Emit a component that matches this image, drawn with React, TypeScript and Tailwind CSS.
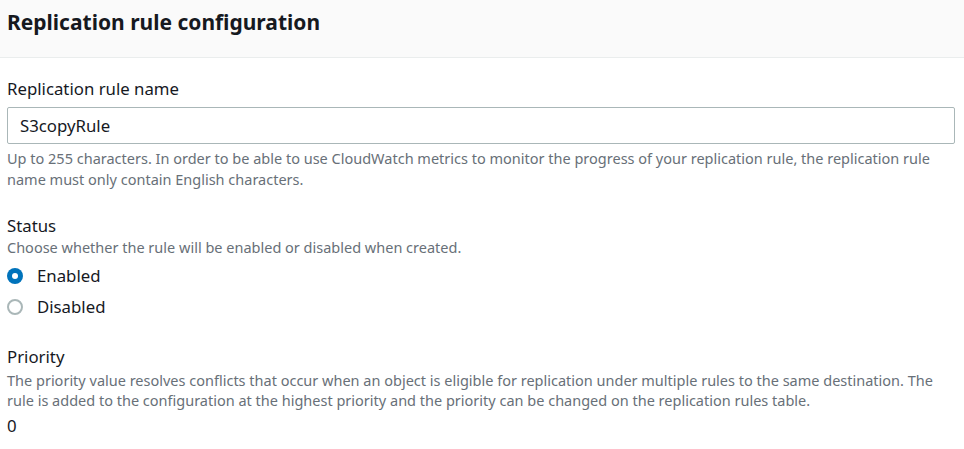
export default function App() {
  return (
    <div className="w-[964px] h-[449px] bg-white text-[#16191f] overflow-hidden" style={{ fontFamily: '"Noto Sans", Arial, sans-serif' }}>
      <div className="h-[58px] bg-[#fafafa] border-b border-[#eaeded] px-[7px] flex items-center">
        <h2 className="text-[21px] font-bold leading-[24px] -mt-[14px]">Replication rule configuration</h2>
      </div>
      <div className="px-[7px] pt-[20px]">
        <label className="block text-[16.8px] leading-[22px]">Replication rule name</label>
        <div className="mt-[7px] mr-[2px] h-[37px] border border-[#aab7b8] rounded-[2px] px-[12px] flex items-center text-[16.8px]">
          S3copyRule
        </div>
        <p className="mt-[4px] text-[14.5px] leading-[21px] text-[#687078]">
          Up to 255 characters. In order to be able to use CloudWatch metrics to monitor the progress of your replication rule, the replication rule name must only contain English characters.
        </p>

        <div className="mt-[25px]">
          <div className="text-[16.8px] leading-[22px]">Status</div>
          <div className="text-[14.5px] leading-[20px] text-[#687078]">Choose whether the rule will be enabled or disabled when created.</div>
          <div className="mt-[8px] flex flex-col gap-[9px]">
            <div className="flex items-center gap-[14px] h-[22px]">
              <span className="w-[16px] h-[16px] rounded-full bg-[#0073bb] flex items-center justify-center">
                <span className="w-[6px] h-[6px] rounded-full bg-white" />
              </span>
              <span className="text-[16.8px]">Enabled</span>
            </div>
            <div className="flex items-center gap-[14px] h-[22px]">
              <span className="w-[16px] h-[16px] rounded-full border-2 border-[#aab7b8]" />
              <span className="text-[16.8px]">Disabled</span>
            </div>
          </div>
        </div>

        <div className="mt-[28px]">
          <div className="text-[16.8px] leading-[22px]">Priority</div>
          <p className="mt-[2px] text-[14.5px] leading-[20px] text-[#687078]">
            The priority value resolves conflicts that occur when an object is eligible for replication under multiple rules to the same destination. The rule is added to the configuration at the highest priority and the priority can be changed on the replication rules table.
          </p>
          <div className="mt-[5px] text-[16.8px] leading-[22px]">0</div>
        </div>
      </div>
    </div>
  )
}
